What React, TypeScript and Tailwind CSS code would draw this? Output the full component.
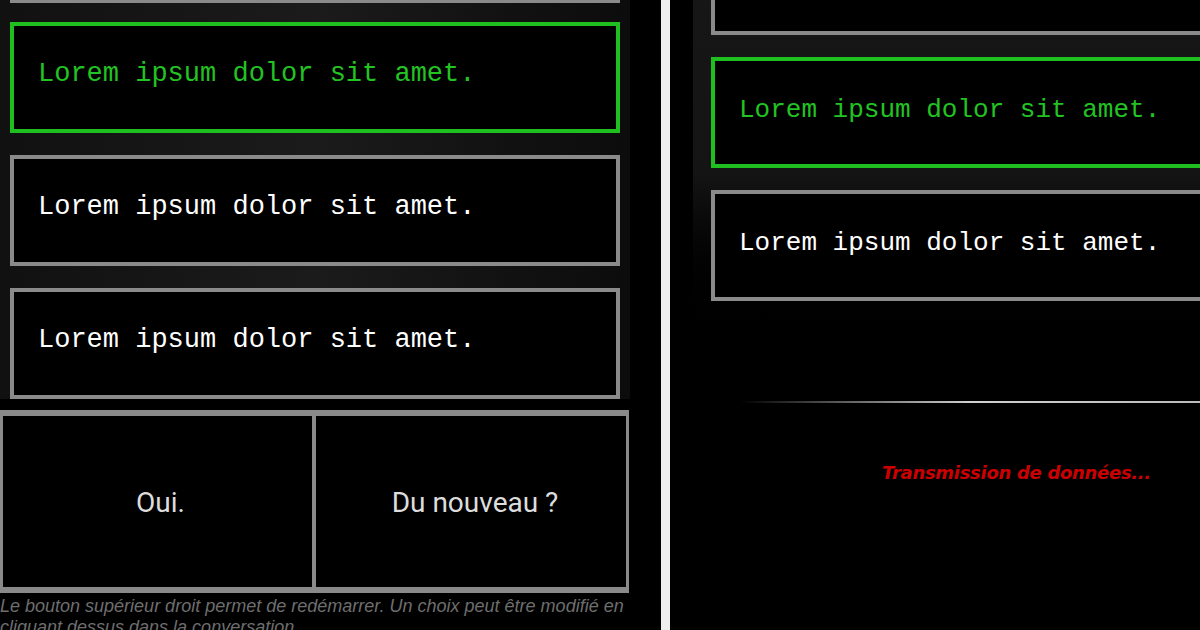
const mono = { fontFamily: '"Liberation Mono", "DejaVu Sans Mono", monospace' };

type BoxProps = {
  text?: string;
  active?: boolean;
  className?: string;
};

function ChoiceBox({ text, active, className = "" }: BoxProps) {
  return (
    <div
      className={`h-[111px] shrink-0 border-[4px] bg-black flex items-center pb-[6px] pl-[24px] ${
        active ? "border-[#1fbf1f] text-[#22c322]" : "border-[#8a8a8a] text-white"
      } ${className}`}
    >
      {text && (
        <span className="text-[27px] leading-none whitespace-nowrap font-['Liberation_Mono',monospace]">
          {text}
        </span>
      )}
    </div>
  );
}

const lorem = "Lorem ipsum dolor sit amet.";

function LeftPanel() {
  return (
    <div className="w-[661px] shrink-0 flex flex-col bg-black">
      <div className="w-[630px] px-[10px] flex flex-col gap-[22px] bg-gradient-to-r from-[#111111] via-[#1b1b1b] to-[#0c0c0c]">
        <ChoiceBox className="-mt-[108px] mb-[-3px]" />
        <ChoiceBox text={lorem} active />
        <ChoiceBox text={lorem} />
        <ChoiceBox text={lorem} />
      </div>
      <div className="mt-[3px] ml-[30px] w-[575px] h-[2px] bg-gradient-to-r from-transparent via-[#d8d8d8] to-transparent" />
      <div className="mt-[8px] w-[629px] h-[183px] shrink-0 flex border-x-[3px] border-y-[6px] border-[#8a8a8a] bg-black font-['Roboto',sans-serif] text-[28px] text-[#dddddd]">
        <div className="w-[309px] flex items-center justify-center pl-[6px] pt-[2px]">Oui.</div>
        <div className="w-[4px] bg-[#8a8a8a]" />
        <div className="flex-1 flex items-center justify-center pl-[8px] pt-[2px]">Du nouveau ?</div>
      </div>
      <p className="mt-[3px] text-[18px] leading-[21px] italic text-[#6e6e6e] font-['Liberation_Sans',Arial,sans-serif] whitespace-nowrap">
        Le bouton supérieur droit permet de redémarrer. Un choix peut être modifié en
        <br />
        cliquant dessus dans la conversation.
      </p>
    </div>
  );
}

function RightPanel() {
  return (
    <div className="flex-1 min-w-0 flex flex-col bg-black pl-[23px]">
      <div className="pl-[18px] pb-[48px] flex flex-col gap-[22px] bg-gradient-to-b from-[#161616] via-[#141414] to-black">
        <ChoiceBox className="-mt-[76px] w-[520px]" />
        <ChoiceBox text={lorem} active className="w-[520px] [&>span]:text-[26px]" />
        <ChoiceBox text={lorem} className="w-[520px] [&>span]:text-[26px]" />
      </div>
      <div className="mt-[52px] ml-[47px] h-[2px] bg-gradient-to-r from-transparent via-[#d0d0d0] to-[#bbbbbb]" />
      <div className="mt-[61px] pl-[189px] text-[18px] leading-none font-bold italic text-[#cc0000] whitespace-nowrap font-['DejaVu_Sans',Verdana,sans-serif] tracking-[-0.3px]">
        Transmission de données...
      </div>
    </div>
  );
}

export default function App() {
  return (
    <div className="w-[1200px] h-[630px] overflow-hidden flex bg-black" style={mono}>
      <LeftPanel />
      <div className="w-[9px] shrink-0 bg-[#eeeeee]" />
      <RightPanel />
    </div>
  );
}
